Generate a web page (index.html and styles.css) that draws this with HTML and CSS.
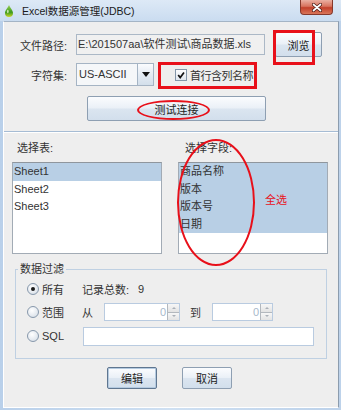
FILE: index.html
```html
<!DOCTYPE html>
<html lang="zh">
<head>
    <meta charset="UTF-8">
    <title>Excel数据源管理(JDBC)</title>
    <link rel="stylesheet" href="styles.css">
</head>
<body>
    <div class="window">
        <div class="titlebar">
            <svg class="app-icon" viewBox="0 0 8 12">
                <defs>
                    <linearGradient id="drop" x1="0" y1="0" x2="0" y2="1">
                        <stop offset="0" stop-color="#9ad255"/>
                        <stop offset="0.6" stop-color="#3d9a1c"/>
                        <stop offset="1" stop-color="#c9d62a"/>
                    </linearGradient>
                </defs>
                <path d="M4 0 C5 3 8 5 8 8 A4 4 0 0 1 0 8 C0 5 3 3 4 0 Z" fill="url(#drop)"/>
                <ellipse cx="2.8" cy="6.5" rx="0.9" ry="1.8" fill="#e8f6c8" opacity="0.8"/>
            </svg>
            <span class="title">Excel数据源管理(JDBC)</span>
            <span class="close">
                <svg viewBox="0 0 10 9" width="10" height="9">
                    <path d="M1.5 1.5 L8.5 7.5 M8.5 1.5 L1.5 7.5" stroke="#4a1d16" stroke-width="3.2" stroke-linecap="round"/>
                    <path d="M1.5 1.5 L8.5 7.5 M8.5 1.5 L1.5 7.5" stroke="#fff" stroke-width="1.7" stroke-linecap="round"/>
                </svg>
            </span>
        </div>

        <div class="client">
            <div class="row row-file">
                <label class="lbl">文件路径:</label>
                <div class="path">E:\201507aa\软件测试\商品数据.xls</div>
                <button class="btn browse">浏览</button>
            </div>

            <div class="row row-charset">
                <label class="lbl">字符集:</label>
                <div class="combo">
                    <span class="combo-text">US-ASCII</span>
                    <span class="combo-arrow"><i></i></span>
                </div>
                <div class="check">
                    <span class="box">
                        <svg viewBox="0 0 10 10" width="10" height="10">
                            <path d="M2.2 5 L4.2 7.6 L8 2.4" fill="none" stroke="#111" stroke-width="1.7"/>
                        </svg>
                    </span>
                    <span class="check-text">首行含列名称</span>
                </div>
            </div>

            <button class="btn test">测试连接</button>

            <div class="sep"></div>

            <div class="lists">
                <div class="col">
                    <div class="cap">选择表:</div>
                    <ul class="list">
                        <li class="sel">Sheet1</li>
                        <li>Sheet2</li>
                        <li>Sheet3</li>
                    </ul>
                </div>
                <div class="col col-fields">
                    <div class="cap">选择字段:</div>
                    <ul class="list">
                        <li class="sel">商品名称</li>
                        <li class="sel">版本</li>
                        <li class="sel">版本号</li>
                        <li class="sel">日期</li>
                    </ul>
                </div>
            </div>

            <fieldset class="filter">
                <legend>数据过滤</legend>
                <div class="filter-body">
                    <div class="frow">
                        <div class="opt"><span class="radio on"></span>所有</div>
                        <span>记录总数:</span>
                        <span class="count">9</span>
                    </div>
                    <div class="frow">
                        <div class="opt"><span class="radio"></span>范围</div>
                        <span>从</span>
                        <div class="spinner from">
                            <span class="spin-val">0</span>
                            <span class="spin-btns"><b class="up"></b><b class="down"></b></span>
                        </div>
                        <span class="to">到</span>
                        <div class="spinner until">
                            <span class="spin-val">0</span>
                            <span class="spin-btns"><b class="up"></b><b class="down"></b></span>
                        </div>
                    </div>
                    <div class="frow frow-sql">
                        <div class="opt"><span class="radio"></span>SQL</div>
                        <div class="sql"></div>
                    </div>
                </div>
            </fieldset>

            <div class="actions">
                <button class="btn btn-default">编辑</button>
                <button class="btn">取消</button>
            </div>

            <!-- red annotations drawn over the dialog -->
            <div class="mark mark-browse"></div>
            <div class="mark mark-check"></div>
            <div class="mark ring ring-test"></div>
            <div class="mark ring ring-fields"></div>
            <span class="note">全选</span>
        </div>
    </div>
</body>
</html>
```

FILE: styles.css
```css
* {
    box-sizing: border-box;
}
body {
    margin: 0;
    font-family: "Liberation Sans", "Noto Sans CJK SC", sans-serif;
    font-size: 11px;
    color: #333;
    background: #c4d8ee;
}
.window {
    width: 341px;
    height: 410px;
    display: flex;
    flex-direction: column;
    background: linear-gradient(90deg, #b9d0ea, #cfe0f2 50%, #bdd2ea);
}
.titlebar {
    height: 21px;
    flex: none;
    display: flex;
    align-items: center;
    padding-left: 5px;
    background: linear-gradient(#dde9f6, #cadcf0);
}
.app-icon {
    width: 8px;
    height: 12px;
}
.title {
    margin-left: 9px;
    font-size: 10.5px;
    color: #1b1b1b;
}
.close {
    margin-left: auto;
    margin-right: 8px;
    align-self: flex-start;
    width: 33px;
    height: 15px;
    display: flex;
    align-items: center;
    justify-content: center;
    border: 1px solid #86392c;
    border-top: none;
    border-radius: 0 0 4px 4px;
    background: linear-gradient(#eab0a2, #d8735e 45%, #c2402a 55%, #d9765a);
}

.client {
    position: relative;
    flex: none;
    margin-left: 3px;
    width: 336px;
    height: 387px;
    background: #eeeeee;
    border: 1px solid;
    border-color: #a4b4c5 #8c9cae #fff #fff;
}

.row {
    display: flex;
    align-items: center;
}
.row-file {
    margin-top: 10px;
    height: 25px;
}
.lbl {
    width: 63px;
    text-align: right;
}
.path {
    margin-left: 9px;
    width: 189px;
    height: 21px;
    line-height: 19px;
    padding-left: 1px;
    white-space: nowrap;
    overflow: hidden;
    background: #f0f0f0;
    border: 1px solid #abb8c6;
}
.btn {
    font: inherit;
    color: #222;
    padding: 0;
    border: 1px solid #8e9fb2;
    border-radius: 2px;
    background: linear-gradient(#fbfcfe, #eaf0f7 48%, #dbe5f0 52%, #d2dfec);
}
.browse {
    margin-left: 10px;
    width: 47px;
    height: 25px;
}
.row-charset {
    margin-top: 6px;
    height: 23px;
}
.combo {
    margin-left: 9px;
    width: 78px;
    height: 23px;
    display: flex;
    border: 1px solid #a5b4c4;
    background: #f5f7f9;
}
.combo-text {
    flex: 1;
    padding-left: 2px;
    line-height: 21px;
}
.combo-arrow {
    width: 16px;
    display: flex;
    align-items: center;
    justify-content: center;
    border-left: 1px solid #a5b4c4;
    background: linear-gradient(#fbfcfe, #e4ebf3 50%, #d3dfeb);
}
.combo-arrow i {
    border-left: 4px solid transparent;
    border-right: 4px solid transparent;
    border-top: 5px solid #111;
}
.check {
    margin-left: 21px;
    display: flex;
    align-items: center;
    gap: 3px;
}
.check-text {
    letter-spacing: -0.5px;
}
.box {
    width: 12px;
    height: 12px;
    display: flex;
    align-items: center;
    justify-content: center;
    border: 1px solid #8496a9;
    background: linear-gradient(#fdfdfe, #dfe6ee);
}
.test {
    display: block;
    margin: 10px 0 0 83px;
    width: 179px;
    height: 25px;
}
.sep {
    margin-top: 10px;
    height: 2px;
    border-top: 1px solid #a6bcd4;
    border-bottom: 1px solid #fff;
}

.lists {
    display: flex;
    gap: 16px;
    padding-left: 8px;
    margin-top: 7px;
}
.cap {
    height: 16px;
    line-height: 16px;
    margin-bottom: 6px;
    padding-left: 5px;
}
.col-fields .cap {
    padding-left: 7px;
}
.list {
    margin: 0;
    padding: 0;
    list-style: none;
    width: 150px;
    height: 92px;
    background: #fff;
    border: 1px solid #a2abb5;
    border-top-color: #8f969d;
}
.list li {
    height: 17.5px;
    line-height: 17.5px;
    padding-left: 1px;
}
.list .sel {
    background: #b8cfe5;
}

.filter {
    margin: 7px 0 0 11px;
    padding: 0;
    width: 312px;
    height: 98px;
    min-width: 0;
    border: 1px solid #bfd0e2;
}
.filter legend {
    margin-left: 2px;
    padding: 0 2px;
    line-height: 16px;
}
.filter-body {
    padding: 2px 0 0 11px;
}
.frow {
    display: flex;
    align-items: center;
    height: 20px;
}
.frow + .frow {
    margin-top: 3px;
}
.frow-sql {
    margin-top: 4px !important;
}
.opt {
    width: 55px;
    display: flex;
    align-items: center;
    gap: 3px;
}
.radio {
    position: relative;
    width: 12px;
    height: 12px;
    border-radius: 50%;
    border: 1px solid #8798ab;
    background: radial-gradient(circle at 40% 35%, #fff, #e4e9ef 60%, #cdd6e0);
}
.radio.on::after {
    content: "";
    position: absolute;
    left: 3px;
    top: 3px;
    width: 4px;
    height: 4px;
    border-radius: 50%;
    background: #1a1a1a;
}
.count {
    margin-left: 9px;
}
.spinner {
    display: flex;
    height: 18px;
    margin-left: 11px;
    border: 1px solid #b9cbe0;
    background: #fff;
}
.from {
    width: 76px;
}
.until {
    width: 61px;
}
.to {
    margin-left: 10px;
}
.spin-val {
    flex: 1;
    text-align: right;
    padding-right: 1px;
    line-height: 16px;
    color: #a8b9cc;
}
.spin-btns {
    width: 12px;
    display: flex;
    flex-direction: column;
    border-left: 1px solid #b3b8be;
}
.spin-btns b {
    flex: 1;
    display: flex;
    align-items: center;
    justify-content: center;
    background: linear-gradient(#f7f7f7, #e3e3e3);
}
.spin-btns b + b {
    border-top: 1px solid #b3b8be;
}
.spin-btns .up::after {
    content: "";
    border-left: 2px solid transparent;
    border-right: 2px solid transparent;
    border-bottom: 2px solid #aab0b8;
}
.spin-btns .down::after {
    content: "";
    border-left: 2px solid transparent;
    border-right: 2px solid transparent;
    border-top: 2px solid #aab0b8;
}
.sql {
    margin-left: 1px;
    width: 231px;
    height: 19px;
    background: #fff;
    border: 1px solid #b9cbe0;
}

.actions {
    display: flex;
    gap: 25px;
    margin: 8px 0 0 103px;
}
.actions .btn {
    width: 50px;
    height: 22px;
}
.btn-default {
    border-color: #5f7690;
    box-shadow: inset 0 0 0 1px #b4cae0;
}

.mark {
    position: absolute;
    border: 3px solid #e8101a;
}
.mark-browse {
    left: 269px;
    top: 8px;
    width: 42px;
    height: 35px;
}
.mark-check {
    left: 154px;
    top: 40px;
    width: 99px;
    height: 27px;
}
.ring {
    border-width: 2px;
    border-radius: 50%;
}
.ring-test {
    left: 133px;
    top: 78px;
    width: 73px;
    height: 20px;
}
.ring-fields {
    left: 173px;
    top: 117px;
    width: 78px;
    height: 127px;
}
.note {
    position: absolute;
    left: 261px;
    top: 170px;
    line-height: 16px;
    color: #e8101a;
}
```
